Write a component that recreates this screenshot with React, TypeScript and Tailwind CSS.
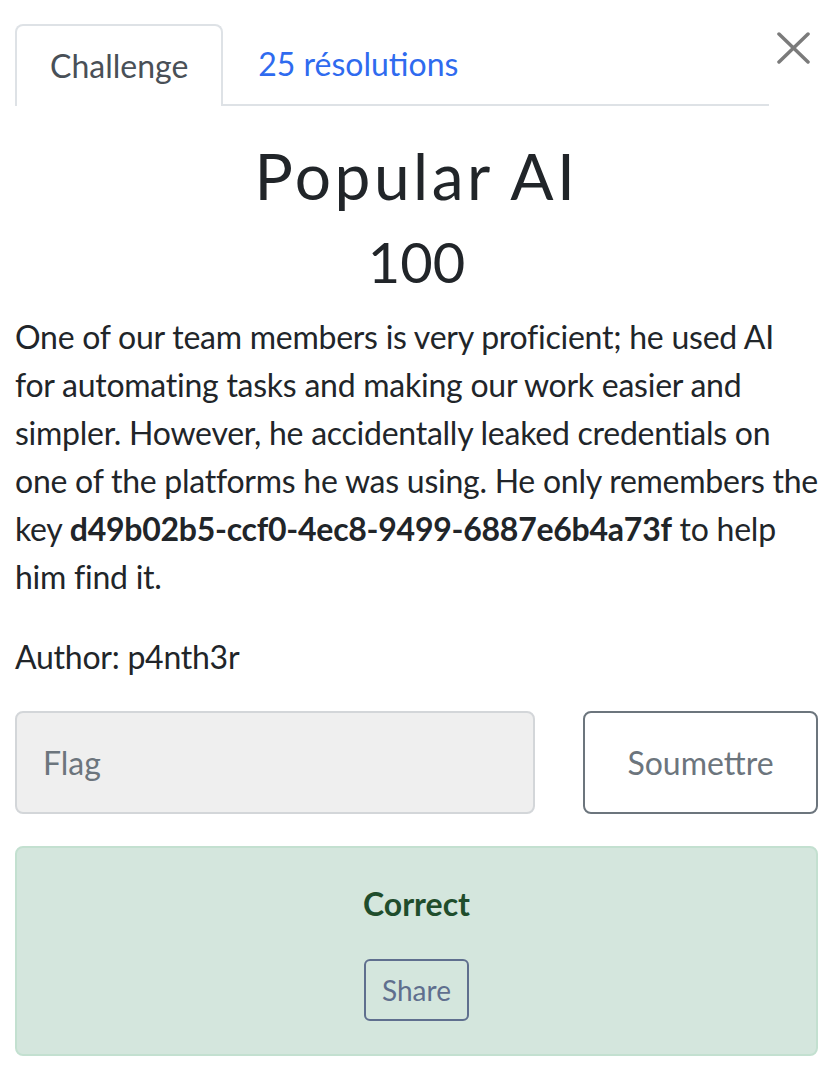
import React from "react";

const Tabs = () => (
  <div className="flex items-start">
    <ul className="flex flex-1 border-b-2 border-[#dee2e6] mt-[24px]">
      <li className="-mb-[2px] border-2 border-b-0 border-[#dee2e6] rounded-t-[8px] bg-white px-[33px] py-[16px] text-[32px] leading-[48px] text-[#495057]">
        Challenge
      </li>
      <li className="px-[35px] py-[16px] text-[32px] leading-[48px] text-[#2f6bef]">
        25 résolutions
      </li>
    </ul>
    <button aria-label="Close" className="w-[49px] flex justify-center pt-[32px]">
      <svg width="33" height="32" viewBox="0 0 33 32" fill="none">
        <path d="M2 2 L31 30 M31 2 L2 30" stroke="#7b7b7b" strokeWidth="3.5" strokeLinecap="round" />
      </svg>
    </button>
  </div>
);

export default function App() {
  return (
    <div
      className="min-h-screen bg-white pl-[15px] pr-[20px] text-[#212529]"
      style={{ fontFamily: "Lato, 'Open Sans', sans-serif" }}
    >
      <Tabs />
      <div className="text-center pt-[32px]">
        <h2 className="text-[64px] leading-[76px] tracking-[3.5px] font-normal">Popular AI</h2>
        <h3 className="text-[56px] leading-[67px] font-normal mt-[14px]">100</h3>
      </div>
      <div className="text-[32px] leading-[48px] mt-[18px] tracking-[-0.25px]">
        <p>
          One of our team members is very proficient; he used AI for automating tasks and making our work easier and
          simpler. However, he accidentally leaked credentials on one of the platforms he was using. He only remembers
          the key <strong className="font-bold">d49b02b5-ccf0-4ec8-9499-6887e6b4a73f</strong> to help him find it.
        </p>
        <p className="mt-[32px]">Author: p4nth3r</p>
      </div>
      <div className="flex gap-[48px] mt-[30px]">
        <input
          placeholder="Flag"
          className="flex-1 h-[103px] rounded-[8px] border-2 border-[#d3d6d9] bg-[#efefef] px-[26px] text-[32px] placeholder:text-[#6c757d] outline-none"
        />
        <button className="w-[235px] h-[103px] rounded-[8px] border-2 border-[#6c757d] bg-white text-[32px] text-[#6c757d]">
          Soumettre
        </button>
      </div>
      <div className="mt-[32px] h-[210px] rounded-[8px] border-2 border-[#c3e0d0] bg-[#d4e6dd] flex flex-col items-center pt-[32px]">
        <strong className="text-[32px] leading-[48px] font-bold text-[#1f4d2c]">Correct</strong>
        <button className="mt-[31px] h-[62px] px-[16px] rounded-[6px] border-2 border-[#5f6f8e] text-[28px] text-[#5f6f8e]">
          Share
        </button>
      </div>
    </div>
  );
}
